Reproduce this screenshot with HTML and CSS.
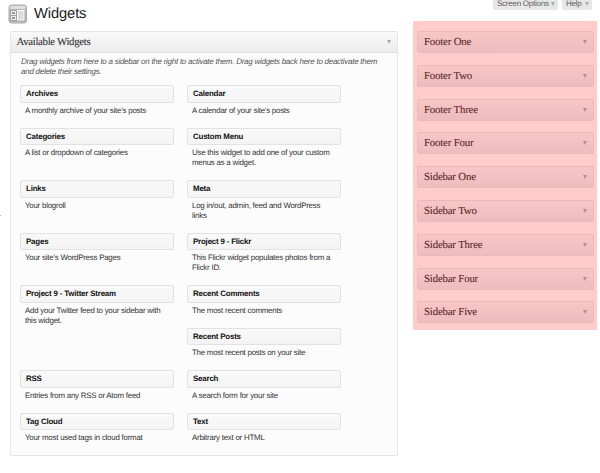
FILE: index.html
```html
<!DOCTYPE html>
<html lang="en">
<head>
<meta charset="utf-8">
<title>Widgets</title>
<link rel="stylesheet" href="styles.css">
</head>
<body>
<div class="page">
  <main class="main">
    <header class="title">
      <svg class="icon" viewBox="0 0 20 20" width="20" height="20">
        <rect x="1" y="1" width="17.5" height="18" rx="2.5" fill="#c9c9c9" stroke="#a8a8a8"/>
        <rect x="2.2" y="2" width="15.2" height="3" rx="1" fill="#dedede"/>
        <rect x="2" y="5.5" width="15.5" height="12" fill="#a2a2a2"/>
        <rect x="3.5" y="7.5" width="4" height="3" fill="#999" stroke="#eee"/>
        <rect x="3.5" y="12.5" width="4" height="3" fill="#999" stroke="#eee"/>
        <rect x="9.5" y="6.5" width="6.5" height="9.5" fill="#ddd" stroke="#fff"/>
      </svg>
      <h1>Widgets</h1>
    </header>
    <section class="panel">
      <h2 class="bar"><span>Available Widgets</span><i class="arrow"></i></h2>
      <p class="intro">Drag widgets from here to a sidebar on the right to activate them. Drag widgets back here to deactivate them<br>and delete their settings.</p>
      <div class="widgets">
        <div class="widget"><h3>Archives</h3><p>A monthly archive of your site’s posts</p></div>
        <div class="widget"><h3>Calendar</h3><p>A calendar of your site’s posts</p></div>
        <div class="widget"><h3>Categories</h3><p>A list or dropdown of categories</p></div>
        <div class="widget"><h3>Custom Menu</h3><p>Use this widget to add one of your custom<br>menus as a widget.</p></div>
        <div class="widget"><h3>Links</h3><p>Your blogroll</p></div>
        <div class="widget"><h3>Meta</h3><p>Log in/out, admin, feed and WordPress<br>links</p></div>
        <div class="widget"><h3>Pages</h3><p>Your site’s WordPress Pages</p></div>
        <div class="widget"><h3>Project 9 - Flickr</h3><p>This Flickr widget populates photos from a<br>Flickr ID.</p></div>
        <div class="widget tall"><h3>Project 9 - Twitter Stream</h3><p>Add your Twitter feed to your sidebar with<br>this widget.</p></div>
        <div class="widget"><h3>Recent Comments</h3><p>The most recent comments</p></div>
        <div class="widget"><h3>Recent Posts</h3><p>The most recent posts on your site</p></div>
        <div class="widget"><h3>RSS</h3><p>Entries from any RSS or Atom feed</p></div>
        <div class="widget"><h3>Search</h3><p>A search form for your site</p></div>
        <div class="widget"><h3>Tag Cloud</h3><p>Your most used tags in cloud format</p></div>
        <div class="widget"><h3>Text</h3><p>Arbitrary text or HTML</p></div>
      </div>
    </section>
  </main>
  <aside class="side">
    <nav class="tabs"><span class="tab options">Screen Options<i class="arrow"></i></span><span class="tab help">Help<i class="arrow"></i></span></nav>
    <div class="areas">
      <h2 class="bar"><span>Footer One</span><i class="arrow"></i></h2>
      <h2 class="bar"><span>Footer Two</span><i class="arrow"></i></h2>
      <h2 class="bar"><span>Footer Three</span><i class="arrow"></i></h2>
      <h2 class="bar"><span>Footer Four</span><i class="arrow"></i></h2>
      <h2 class="bar"><span>Sidebar One</span><i class="arrow"></i></h2>
      <h2 class="bar"><span>Sidebar Two</span><i class="arrow"></i></h2>
      <h2 class="bar"><span>Sidebar Three</span><i class="arrow"></i></h2>
      <h2 class="bar"><span>Sidebar Four</span><i class="arrow"></i></h2>
      <h2 class="bar"><span>Sidebar Five</span><i class="arrow"></i></h2>
    </div>
  </aside>
</div>
<i class="tick"></i>
</body>
</html>
```
FILE: styles.css
```css
* { box-sizing: border-box; margin: 0; padding: 0; }
body { width: 600px; height: 473px; overflow: hidden; background: #fff; font-family: "Liberation Sans", Arial, sans-serif; color: #333; text-rendering: geometricPrecision; }
.page { display: flex; width: 597px; }
.main { width: 388px; margin-left: 10px; }
.title { display: flex; height: 31px; padding-top: 4px; margin-left: -2px; }
.icon { flex: none; }
h1 { margin-left: 6px; font-size: 14.7px; line-height: 20px; font-weight: 400; letter-spacing: -.1px; color: #222; }
.panel { height: 425px; background: #fcfcfc; border: 1px solid #e6e6e6; border-radius: 2px; }
.bar { display: flex; align-items: center; justify-content: space-between; font: 400 10.8px/20px "Liberation Serif", Georgia, serif; color: #333; letter-spacing: -.17px; -webkit-text-stroke: .1px; }
.panel .bar { height: 21px; padding: 0 6px 0 5.5px; border-bottom: 1px solid #dedede; background: linear-gradient(#f9f9f9, #ececec); letter-spacing: -.32px; }
.arrow { width: 0; height: 0; border: 2.5px solid transparent; border-top: 4px solid #aaa; border-bottom: 0; }
.intro { height: 32px; padding: 4px 0 0 10px; font-size: 8px; line-height: 10.4px; font-style: italic; letter-spacing: -.26px; color: #555; white-space: nowrap; }
.widgets { display: grid; grid-template-columns: 154px 154px; column-gap: 13px; grid-template-rows: 42.5px 52.5px 52.5px 52.5px 42.6px 42.6px 42.6px 42px; margin-left: 9px; }
.tall { grid-row: span 2; }
.widget h3 { height: 17.5px; padding-left: 5px; border: 1px solid #e2e2e2; border-radius: 2px; background: linear-gradient(#f9f9f9, #f4f4f4); font-size: 7.9px; line-height: 16px; letter-spacing: -.18px; color: #111; white-space: nowrap; }
.widget p { padding: 3px 0 0 5px; font-size: 7.9px; line-height: 10px; letter-spacing: -.23px; white-space: nowrap; }
.side { width: 184px; margin-left: 15px; }
.tabs { display: flex; justify-content: flex-end; gap: 4px; height: 21px; padding-right: 5px; }
.tab { display: flex; align-items: center; justify-content: space-between; height: 10px; padding: 0 3px 2px 4px; border-radius: 0 0 2px 2px; background: #e7e7e7; font-size: 8px; line-height: 8px; letter-spacing: -.25px; color: #606060; white-space: nowrap; }
.options { width: 65px; }
.help { width: 30px; }
.areas { display: flex; flex-direction: column; gap: 11.8px; height: 309px; padding: 10px 3.5px 0 4px; background: #ffcbcb; }
.areas .bar { height: 22px; padding: 0 6px; border: 1px solid #ecb9b9; border-radius: 2px; background: linear-gradient(#f9c6c6, #edbcbc); color: #5c2b2b; }
.areas .arrow { border-top-color: #bc8b8b; }
.tick { position: absolute; left: 0; top: 215px; width: 1px; height: 1px; background: #bbb; }
```
